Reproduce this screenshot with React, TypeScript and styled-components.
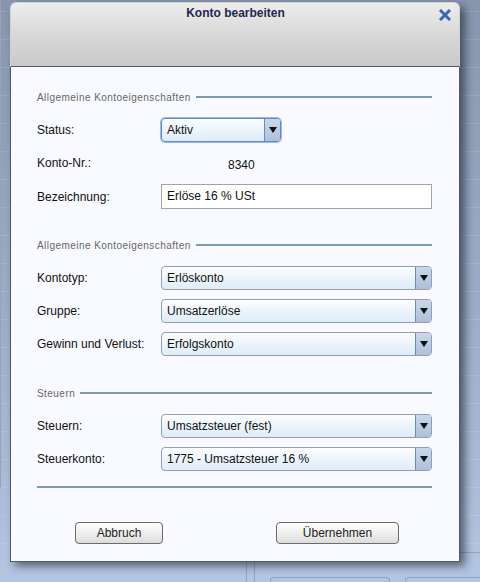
import React from "react";
import styled, { createGlobalStyle } from "styled-components";

const GlobalStyle = createGlobalStyle`
  html, body {
    margin: 0;
    padding: 0;
  }
  body {
    font-family: "Liberation Sans", Arial, sans-serif;
    font-size: 12px;
    color: #111;
  }
`;

const Page = styled.div`
  position: relative;
  width: 480px;
  height: 582px;
  overflow: hidden;
  display: flex;
  background: linear-gradient(180deg, #8796ae 0%, #9badc8 55%, #b2c5e1 100%);
`;

// background app, mostly hidden behind the dialog
const SidePanel = styled.div`
  width: 9px;
  height: 488px;
  display: flex;
  flex-direction: column;
  box-sizing: border-box;
  border-right: 1px solid #9aa3ae;
  background: linear-gradient(#ececee, #dadbdd);
  overflow: hidden;
`;
const SideBar = styled.div`
  height: 15px;
  flex-shrink: 0;
  background: linear-gradient(#f7f7f7, #e3e3e3);
  border-bottom: 1px solid #a4a8ae;
`;
const SidePane = styled.div`
  height: 66px;
  flex-shrink: 0;
  background: linear-gradient(#fbfbfc, #e8eaed);
  border-bottom: 2px solid #6f90b6;
`;
const SideHead = styled.div`
  height: 35px;
  flex-shrink: 0;
  box-sizing: border-box;
  background: linear-gradient(#e4e6e9, #d3d6da);
  border-bottom: 1px solid #b4b9c0;
  border-left: 3px solid #eef0f2;
  border-right: 1px solid #a9aeb5;
`;
const SideRow = styled.div<{ $alt?: boolean; $selected?: boolean }>`
  height: 24px;
  flex-shrink: 0;
  box-sizing: border-box;
  padding-left: 6px;
  line-height: 23px;
  white-space: nowrap;
  font-size: 12px;
  border-bottom: 1px solid #cfd6df;
  color: ${(p) => (p.$selected ? "#2a5a9a" : "#333")};
  background: ${(p) =>
    p.$selected ? "#c3d6ec" : p.$alt ? "#e6ecf3" : "#f6f8fa"};
`;
const SideEnd = styled.div`
  height: 4px;
  flex-shrink: 0;
  border-bottom: 2px solid #6f90b6;
  background: #f4f5f7;
`;

const Desk = styled.div`
  flex: 1;
  display: flex;
  flex-direction: column;
`;
const DeskLines = styled.div`
  flex: 1;
  background: repeating-linear-gradient(
    180deg,
    transparent 0px,
    transparent 11px,
    rgba(255, 255, 255, 0.12) 11px,
    rgba(255, 255, 255, 0.12) 12px,
    transparent 12px,
    transparent 28px
  );
`;
const DeskFooter = styled.div`
  height: 30px;
  display: flex;
`;
const DeskGap = styled.div`
  width: 245px;
`;
const DeskDivider = styled.div`
  width: 7px;
  border-left: 1px solid #8ea3c2;
  border-right: 1px solid #8ea3c2;
`;
const DeskTray = styled.div`
  flex: 1;
  display: flex;
  align-items: flex-end;
  gap: 15px;
  padding-left: 15px;
  border-top: 1px solid #8ea3c2;
`;
const DeskButton = styled.div`
  width: 118px;
  height: 4px;
  border: 1px solid #8ea3c2;
  border-bottom: none;
  border-radius: 4px 4px 0 0;
`;

// the dialog floats over the app
const Dialog = styled.div`
  position: absolute;
  left: 10px;
  top: 2px;
  width: 450px;
  height: 560px;
  display: flex;
  flex-direction: column;
  border-radius: 6px 6px 0 0;
  box-shadow: 5px 4px 8px rgba(25, 30, 40, 0.6);
`;
const TitleBar = styled.div`
  height: 65px;
  box-sizing: border-box;
  display: grid;
  grid-template-columns: 1fr auto 1fr;
  align-items: start;
  padding: 3px 8px 0 9px;
  border: 1px solid #d2d2d2;
  border-bottom: 1px solid #55585e;
  border-radius: 6px 6px 0 0;
  background: linear-gradient(180deg, #ededed 0%, #d6d6d6 55%, #c9c9c9 100%);
`;
const Title = styled.div`
  grid-column: 2;
  font-weight: bold;
  font-size: 12px;
  line-height: 15px;
  color: #1b2a52;
`;
const CloseButton = styled.button`
  grid-column: 3;
  justify-self: end;
  width: 12px;
  height: 12px;
  margin-top: 3px;
  padding: 0;
  border: none;
  background: none;
  display: flex;
`;

const Body = styled.div`
  flex: 1;
  display: flex;
  flex-direction: column;
  padding: 24px 27px 0 26px;
  background: #f8faff;
  border: 1px solid #55585e;
  border-top: none;
`;
const Section = styled.div`
  display: flex;
  flex-direction: column;
  gap: 9px;
  & + & {
    margin-top: 31px;
  }
`;
const Legend = styled.div`
  height: 12px;
  display: flex;
  align-items: center;
  gap: 5px;
  margin-bottom: 6px;
  font-size: 10px;
  letter-spacing: 0.45px;
  color: #666;
  &::after {
    content: "";
    flex: 1;
    height: 2px;
    background: #7b9bbb;
  }
`;
const Row = styled.div`
  display: grid;
  grid-template-columns: 124px 1fr;
  align-items: center;
  height: 24px;
`;
const Label = styled.span`
  font-size: 12px;
  color: #111;
`;
const Value = styled.span`
  padding-left: 67px;
  padding-top: 3px;
  font-size: 12px;
  color: #111;
`;
const TextInput = styled.div`
  height: 25px;
  box-sizing: border-box;
  padding-left: 5px;
  line-height: 23px;
  border: 1px solid #a3a3a3;
  background: #fff;
  font-size: 12px;
`;
const SelectBox = styled.div<{ $width?: string; $focus?: boolean }>`
  width: ${(p) => p.$width ?? "100%"};
  height: 24px;
  box-sizing: border-box;
  display: flex;
  border: 1px solid ${(p) => (p.$focus ? "#5b8ad0" : "#8f9fb5")};
  border-radius: 4px;
  overflow: hidden;
  background: linear-gradient(180deg, #fdfeff 0%, #eef5fb 45%, #dfecf7 100%);
  box-shadow: ${(p) => (p.$focus ? "0 0 0 1px #9dbde6" : "none")};
`;
const SelectText = styled.span`
  flex: 1;
  padding-left: 5px;
  line-height: 22px;
  font-size: 12px;
  color: #111;
  white-space: nowrap;
`;
const SelectArrow = styled.span`
  width: 15px;
  display: flex;
  align-items: center;
  justify-content: center;
  border-left: 1px solid #6a89bd;
  background: linear-gradient(180deg, #cbd8ea 0%, #aebfd8 100%);
  &::after {
    content: "";
    border-left: 4px solid transparent;
    border-right: 4px solid transparent;
    border-top: 6px solid #111;
  }
`;
const Rule = styled.div`
  height: 2px;
  margin-top: 15px;
  background: #7b9bbb;
`;
const Footer = styled.div`
  display: flex;
  justify-content: space-between;
  margin-top: 34px;
  padding: 0 33px 0 38px;
`;
const Button = styled.button<{ $width: number }>`
  width: ${(p) => p.$width}px;
  height: 22px;
  padding: 0;
  border: 1px solid #6b6b6b;
  border-radius: 4px;
  background: linear-gradient(180deg, #fdfdfd 0%, #efefef 50%, #dcdcdc 100%);
  font-family: "Liberation Sans", Arial, sans-serif;
  font-size: 12px;
  color: #222;
`;

const Select: React.FC<{ value: string; width?: string; focus?: boolean }> = ({
  value,
  width,
  focus,
}) => (
  <SelectBox $width={width} $focus={focus}>
    <SelectText>{value}</SelectText>
    <SelectArrow />
  </SelectBox>
);

const sideRows = [
  { t: "H" },
  { t: "H", alt: true },
  { t: "H" },
  { t: "H", alt: true },
  { t: "H" },
  { t: "U", alt: true },
  { t: "U" },
  { t: "H", alt: true },
  { t: "U", selected: true },
  { t: "H", alt: true },
  { t: "H" },
  { t: "H", alt: true },
  { t: "." },
];

export default function App() {
  return (
    <>
      <GlobalStyle />
      <Page>
        <SidePanel>
          <SideBar />
          <SidePane />
          <SideHead />
          {sideRows.map((r, i) => (
            <SideRow key={i} $alt={r.alt} $selected={r.selected}>
              {r.t}
            </SideRow>
          ))}
          <SideEnd />
        </SidePanel>
        <Desk>
          <DeskLines />
          <DeskFooter>
            <DeskGap />
            <DeskDivider />
            <DeskTray>
              <DeskButton />
              <DeskButton />
            </DeskTray>
          </DeskFooter>
        </Desk>

        <Dialog>
          <TitleBar>
            <Title>Konto bearbeiten</Title>
            <CloseButton aria-label="Schließen">
              <svg width="12" height="12" viewBox="0 0 12 12">
                <path
                  d="M2 2 L10 10 M10 2 L2 10"
                  stroke="#3a69ab"
                  strokeWidth="3"
                  strokeLinecap="square"
                />
              </svg>
            </CloseButton>
          </TitleBar>
          <Body>
            <Section>
              <Legend>Allgemeine Kontoeigenschaften</Legend>
              <Row>
                <Label>Status:</Label>
                <Select value="Aktiv" width="120px" focus />
              </Row>
              <Row>
                <Label>Konto-Nr.:</Label>
                <Value>8340</Value>
              </Row>
              <Row>
                <Label>Bezeichnung:</Label>
                <TextInput>Erlöse 16 % USt</TextInput>
              </Row>
            </Section>
            <Section>
              <Legend>Allgemeine Kontoeigenschaften</Legend>
              <Row>
                <Label>Kontotyp:</Label>
                <Select value="Erlöskonto" />
              </Row>
              <Row>
                <Label>Gruppe:</Label>
                <Select value="Umsatzerlöse" />
              </Row>
              <Row>
                <Label>Gewinn und Verlust:</Label>
                <Select value="Erfolgskonto" />
              </Row>
            </Section>
            <Section>
              <Legend>Steuern</Legend>
              <Row>
                <Label>Steuern:</Label>
                <Select value="Umsatzsteuer (fest)" />
              </Row>
              <Row>
                <Label>Steuerkonto:</Label>
                <Select value="1775 - Umsatzsteuer 16 %" />
              </Row>
            </Section>
            <Rule />
            <Footer>
              <Button $width={88}>Abbruch</Button>
              <Button $width={123}>Übernehmen</Button>
            </Footer>
          </Body>
        </Dialog>
      </Page>
    </>
  );
}
